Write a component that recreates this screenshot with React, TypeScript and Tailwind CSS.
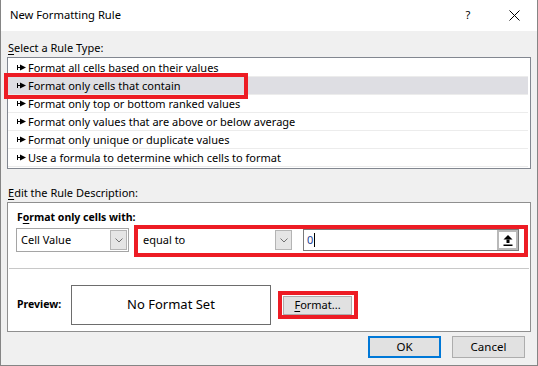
import React from "react";

const rules = [
  "Format all cells based on their values",
  "Format only cells that contain",
  "Format only top or bottom ranked values",
  "Format only values that are above or below average",
  "Format only unique or duplicate values",
  "Use a formula to determine which cells to format",
];

function RuleArrow() {
  return (
    <svg width="9" height="7" viewBox="0 0 9 7" className="shrink-0">
      <rect x="0" y="1" width="1" height="5" fill="#000" />
      <rect x="1" y="3" width="3" height="1" fill="#000" />
      <polygon points="3,0.5 9,3.5 3,6.5" fill="#000" />
    </svg>
  );
}

function DropButton() {
  return (
    <div className="w-[17px] h-[20px] bg-[#e5e5e5] border border-[#b4b4b4] flex items-center justify-center shrink-0">
      <svg width="8" height="5" viewBox="0 0 8 5">
        <polyline points="0.5,0.5 4,4 7.5,0.5" fill="none" stroke="#707070" strokeWidth="1" />
      </svg>
    </div>
  );
}

export default function App() {
  return (
    <div
      className="relative w-[538px] h-[366px] bg-[#f0f0f0] border-x border-b border-[#858585] flex flex-col text-[11px] text-black"
      style={{ fontFamily: '"Noto Sans", "Open Sans", sans-serif' }}
    >
      {/* Title bar */}
      <div className="h-[31px] bg-white flex items-center shrink-0 text-[11.2px]">
        <span className="pl-[9px] flex-1">New Formatting Rule</span>
        <div className="w-[46px] flex justify-center">?</div>
        <div className="w-[46px] flex justify-center">
          <svg width="11" height="11" viewBox="0 0 11 11">
            <path d="M0.5 0.5 L10.5 10.5 M10.5 0.5 L0.5 10.5" stroke="#000" strokeWidth="1" />
          </svg>
        </div>
      </div>

      <div className="px-[6px] flex flex-col">
        <div className="mt-[8px] h-[18px] leading-[18px] pl-[1px]">
          <span className="underline underline-offset-2">S</span>elect a Rule Type:
        </div>

        {/* Rule type list */}
        <div className="bg-white border border-[#828790] py-[1px] pr-[2px]">
          {rules.map((r, i) => (
            <div
              key={r}
              className={
                "h-[18px] flex items-center gap-[2px] pl-[9px] border-b border-[#ececec] " +
                (i === 1 ? "bg-[#dedee3]" : "")
              }
            >
              <RuleArrow />
              <span className="leading-[17px]">{r}</span>
            </div>
          ))}
        </div>

        <div className="mt-[15px] h-[18px] leading-[18px] pl-[1px]">
          <span className="underline underline-offset-2">E</span>dit the Rule Description:
        </div>

        {/* Rule description */}
        <div className="h-[130px] bg-white border border-[#8f8f8f] flex flex-col">
          <div className="pt-[5px] pl-[9px] h-[23px] leading-[18px] font-bold text-[10.5px]">
            F<span className="underline underline-offset-2">o</span>rmat only cells with:
          </div>

          <div className="mt-[2px] h-[24px] flex items-center pl-[8px]">
            <div className="w-[113px] h-[24px] border border-[#a5a5a5] flex items-center justify-between pl-[4px] pr-[1px]">
              <span>Cell Value</span>
              <DropButton />
            </div>
            <div className="ml-[8px] w-[157px] h-[24px] flex items-center justify-between pl-[6px] pr-[2px]">
              <span>equal to</span>
              <DropButton />
            </div>
            <div className="ml-[9px] w-[216px] h-[22px] border border-[#7a7a7a] flex items-center justify-between pl-[3px]">
              <div className="flex items-center">
                <span className="text-[#1a3d8f]">0</span>
                <span className="w-px h-[14px] bg-black ml-[1px]" />
              </div>
              <div className="w-[21px] h-[20px] border-2 border-[#b9b9b9] bg-white flex items-center justify-center">
                <svg width="10" height="11" viewBox="0 0 10 11">
                  <polygon points="5,0 9.5,4.5 0.5,4.5" fill="#000" />
                  <rect x="3.5" y="4.5" width="3" height="3.5" fill="#000" />
                  <rect x="0.5" y="9.5" width="9" height="1.5" fill="#000" />
                </svg>
              </div>
            </div>
          </div>

          <div className="mt-[16px] mx-[1px] h-px bg-[#c8c8c8]" />

          <div className="mt-[16px] h-[40px] flex items-center pl-[9px]">
            <span className="w-[54px] font-bold text-[10.5px]">Preview:</span>
            <div className="w-[200px] h-[40px] border border-[#6d6d6d] flex items-center justify-center text-[13px]">
              No Format Set
            </div>
            <div className="ml-[12px] w-[69px] h-[19px] bg-[#e1e1e1] border border-[#adadad] flex items-center justify-center">
              <span>
                <span className="underline underline-offset-2">F</span>ormat...
              </span>
            </div>
          </div>
        </div>
      </div>

      {/* Dialog buttons */}
      <div className="mt-[4px] flex justify-end gap-[11px] pr-[12px] text-[11.5px]">
        <div className="w-[73px] h-[22px] bg-[#e1e1e1] border-2 border-[#0078d7] flex items-center justify-center">
          OK
        </div>
        <div className="w-[73px] h-[22px] bg-[#e1e1e1] border border-[#adadad] flex items-center justify-center">
          Cancel
        </div>
      </div>

      {/* Red annotation boxes */}
      <div className="absolute left-[3px] top-[73px] w-[244px] h-[26px] border-4 border-[#ed1c24]" />
      <div className="absolute left-[133px] top-[225px] w-[394px] h-[32px] border-4 border-[#ed1c24]" />
      <div className="absolute left-[277px] top-[291px] w-[80px] h-[28px] border-4 border-[#ed1c24]" />
    </div>
  );
}
